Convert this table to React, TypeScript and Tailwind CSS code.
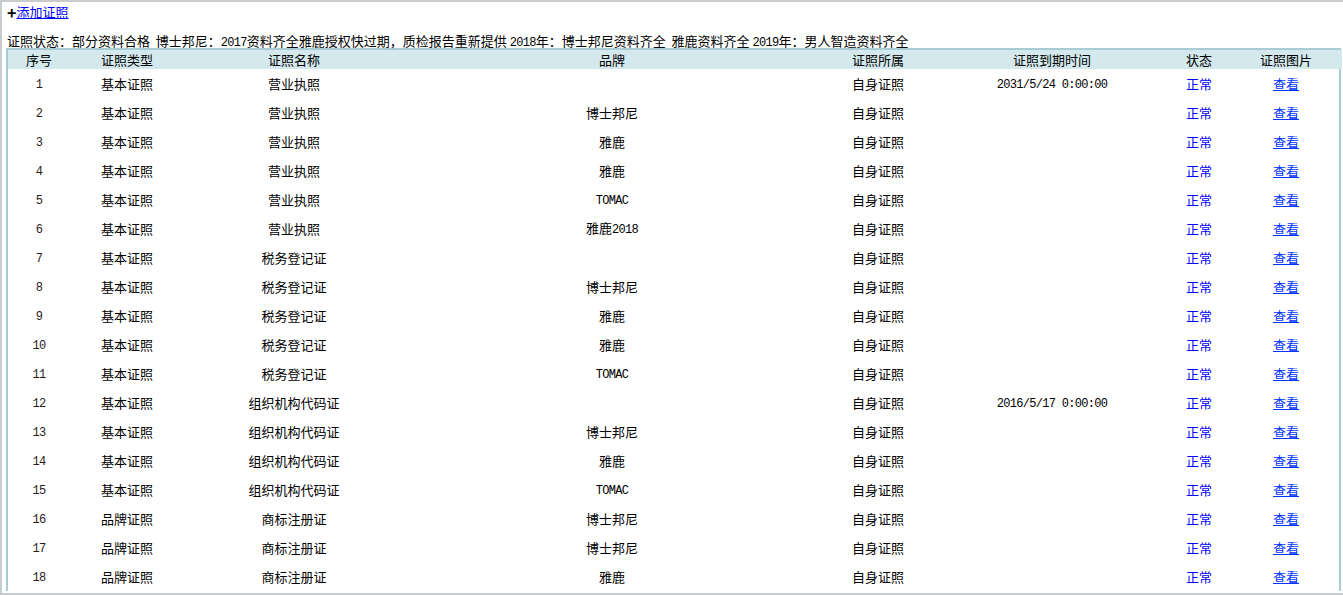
import React from "react";

type Row = { type: string; name: string; brand: string; expire?: string };

const rows: Row[] = [
  { type: "基本证照", name: "营业执照", brand: "", expire: "2031/5/24 0:00:00" },
  { type: "基本证照", name: "营业执照", brand: "博士邦尼" },
  { type: "基本证照", name: "营业执照", brand: "雅鹿" },
  { type: "基本证照", name: "营业执照", brand: "雅鹿" },
  { type: "基本证照", name: "营业执照", brand: "TOMAC" },
  { type: "基本证照", name: "营业执照", brand: "雅鹿2018" },
  { type: "基本证照", name: "税务登记证", brand: "" },
  { type: "基本证照", name: "税务登记证", brand: "博士邦尼" },
  { type: "基本证照", name: "税务登记证", brand: "雅鹿" },
  { type: "基本证照", name: "税务登记证", brand: "雅鹿" },
  { type: "基本证照", name: "税务登记证", brand: "TOMAC" },
  { type: "基本证照", name: "组织机构代码证", brand: "", expire: "2016/5/17 0:00:00" },
  { type: "基本证照", name: "组织机构代码证", brand: "博士邦尼" },
  { type: "基本证照", name: "组织机构代码证", brand: "雅鹿" },
  { type: "基本证照", name: "组织机构代码证", brand: "TOMAC" },
  { type: "品牌证照", name: "商标注册证", brand: "博士邦尼" },
  { type: "品牌证照", name: "商标注册证", brand: "博士邦尼" },
  { type: "品牌证照", name: "商标注册证", brand: "雅鹿" },
];

const headers = ["序号", "证照类型", "证照名称", "品牌", "证照所属", "证照到期时间", "状态", "证照图片"];
const widths = ["w-[62px]", "w-[114px]", "w-[220px]", "w-[416px]", "w-[116px]", "w-[232px]", "w-[62px]", "w-[112px]"];

const Mono = ({ children }: { children: React.ReactNode }) => (
  <span className="font-['Liberation_Mono','Noto_Sans_CJK_SC',monospace] text-[12px] leading-[14px] tracking-[-0.7px]">
    {children}
  </span>
);

// brand names may mix latin and CJK, e.g. 雅鹿2018
const Brand = ({ value }: { value: string }) => {
  if (value === "TOMAC") return <Mono>{value}</Mono>;
  const m = value.match(/^(\D+)(\d+)$/);
  if (m) {
    return (
      <>
        {m[1]}
        <Mono>{m[2]}</Mono>
      </>
    );
  }
  return <>{value}</>;
};

export default function App() {
  return (
    <div className="h-[595px] w-[1343px] overflow-hidden border-t-2 border-b-2 border-l-2 border-[#c8cccf] bg-white font-['Noto_Sans_CJK_SC',sans-serif] text-[13px] leading-[16px] text-black">
      <div className="flex h-[18px] items-center pl-[5px] pt-[2px]">
        <span className="text-[16px] leading-[16px] font-bold">+</span>
        <a href="#" className="text-[#0000ff] underline">
          添加证照
        </a>
      </div>
      <div className="mt-[13px] h-[15px] pl-[5px] leading-[15px] whitespace-nowrap">
        证照状态：部分资料合格&nbsp; 博士邦尼：<Mono>2017</Mono>资料齐全雅鹿授权快过期，质检报告重新提供 <Mono>2018</Mono>年：博士邦尼资料齐全&nbsp; 雅鹿资料齐全 <Mono>2019</Mono>年：男人智造资料齐全
      </div>
      <div className="ml-[4px] w-[1335px] border-t-2 border-l-2 border-r-2 border-[#a9cbd4]">
        <table className="w-full table-fixed border-collapse">
          <thead>
            <tr className="h-[19px] bg-[#d3e9ee]">
              {headers.map((h, i) => (
                <th key={h} className={`${widths[i]} p-0 text-center leading-[19px] font-normal`}>
                  {h}
                </th>
              ))}
            </tr>
          </thead>
          <tbody>
            {rows.map((r, i) => (
              <tr key={i} className="h-[29px]">
                <td className="p-0 text-center text-[#2a1a1a]">
                  <Mono>{i + 1}</Mono>
                </td>
                <td className="p-0 text-center">{r.type}</td>
                <td className="p-0 text-center">{r.name}</td>
                <td className="p-0 text-center">
                  <Brand value={r.brand} />
                </td>
                <td className="p-0 text-center">自身证照</td>
                <td className="p-0 text-center">{r.expire ? <Mono>{r.expire}</Mono> : null}</td>
                <td className="p-0 text-center text-[#0000ff]">正常</td>
                <td className="p-0 text-center">
                  <a href="#" className="text-[#0033ff] underline">
                    查看
                  </a>
                </td>
              </tr>
            ))}
          </tbody>
        </table>
      </div>
    </div>
  );
}
